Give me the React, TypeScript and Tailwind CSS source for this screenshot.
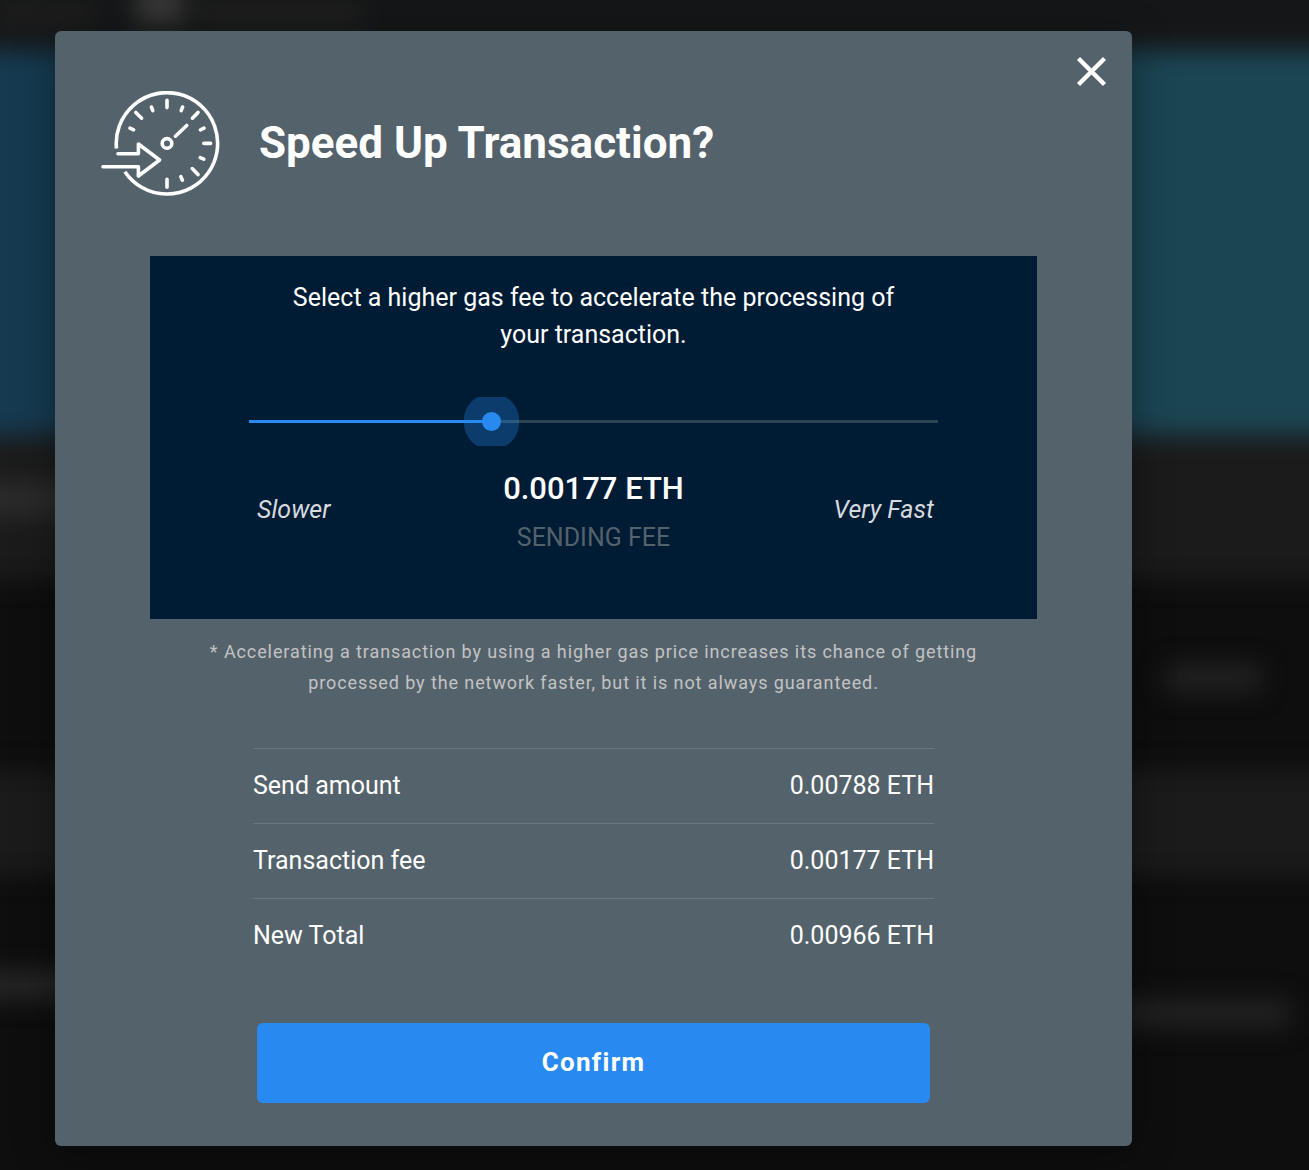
import { useState } from "react";
import type { CSSProperties } from "react";

const amounts = [
  { label: "Send amount", value: "0.00788 ETH" },
  { label: "Transaction fee", value: "0.00177 ETH" },
  { label: "New Total", value: "0.00966 ETH" },
];

function SpeedIcon() {
  return (
    <svg
      viewBox="0 0 120 106"
      className="h-[106px] w-[120px] shrink-0"
      fill="none"
      stroke="white"
      strokeWidth="3.6"
      strokeLinecap="round"
      strokeLinejoin="round"
      aria-hidden="true"
    >
      <path d="M15.5 57.5A50.7 50.7 0 1 1 23.9 80.7" strokeLinecap="butt" />
      <circle cx="66" cy="52.4" r="4.8" />
      <path d="M74.4 45.2 85.7 34.5" />
      <path d="M66 9.2V16.6M66 88.2V96.2M102.8 52.4H109.6M97 21.4 91.4 27.2M34.8 21.4 40.6 27.2M91.2 77.6 97 83.6" />
      <path d="M50.4 16 51.8 19.6M81.6 16 80.2 19.6M29 37.2 32.6 38.8M103 37.2 99.4 38.8M99.2 66.6 102.8 68.2M79.8 85.6 81.4 89.2" />
      <path d="M17 62.7H37.4V53L58.6 69 37.4 85V75.7H2" />
    </svg>
  );
}

/* The wallet page behind the dialog, out of focus. */
function PageBehind() {
  return (
    <div className="absolute inset-0 overflow-hidden bg-[#0e0e0e]" aria-hidden="true">
      <div className="-mx-10 -mt-10 flex h-[1250px] flex-col px-10 blur-[12px]">
        <div className="-mx-10 flex h-[90px] items-end bg-[#151617] px-10 pb-6">
          <div className="h-6 w-24 bg-[#1e1e1e]" />
          <div className="ml-10 h-12 w-12 bg-[#363636]" />
          <div className="ml-4 h-6 w-40 bg-[#202020]" />
        </div>
        <div className="-mx-10 h-[385px] bg-linear-to-r from-[#163a50] from-5% to-[#1b4553] to-90%" />
        <div className="-mx-10 h-[145px] bg-[#1b1b1b] px-10 pt-12">
          <div className="-ml-6 h-8 w-32 bg-[#2c2c2c]" />
        </div>
        <div className="flex h-[190px] justify-end pt-[84px] pr-12">
          <div className="h-7 w-24 bg-[#222222]" />
        </div>
        <div className="-mx-10 h-[105px] bg-[#1b1b1b]" />
        <div className="flex justify-between pt-24">
          <div className="-ml-6 h-7 w-32 bg-[#272727]" />
          <div className="mt-7 mr-5 h-7 w-44 bg-[#222222]" />
        </div>
      </div>
    </div>
  );
}

export default function App() {
  const [speed, setSpeed] = useState(348);
  const fill = { "--fill": `${speed / 10}%` } as CSSProperties;

  return (
    <div className="relative min-h-screen pt-[31px] pr-[177px] pb-6 pl-[55px] font-[Roboto,sans-serif] text-white">
      <PageBehind />
      <div
        role="dialog"
        aria-modal="true"
        aria-labelledby="dialog-title"
        className="relative rounded-md bg-[#54626c] px-[95px] pt-[60px] pb-[43px] shadow-[0_8px_40px_rgba(0,0,0,0.35)]"
      >
        <button type="button" aria-label="Close" className="absolute top-6 right-6 cursor-pointer">
          <svg viewBox="0 0 32 32" className="size-8" fill="none" stroke="white" strokeWidth="4.4" aria-hidden="true">
            <path d="M2.5 3.5 28.5 29.5M28.5 3.5 2.5 29.5" />
          </svg>
        </button>

        <header className="-ml-[49px] flex items-center gap-[38px]">
          <SpeedIcon />
          <h1 id="dialog-title" className="pb-0.5 text-[44px] leading-[52px] font-bold">
            Speed Up Transaction?
          </h1>
        </header>

        <section className="mt-[59px] bg-[#001b34] px-[99px] pt-[23px] pb-[63px]">
          <p className="mx-auto max-w-[640px] text-center text-[25px] leading-[37px]">
            Select a higher gas fee to accelerate the processing of your transaction.
          </p>
          <div className="mt-11 flex h-[49px] items-center overflow-hidden">
            <input
              type="range"
              min={0}
              max={1000}
              value={speed}
              onChange={(e) => setSpeed(Number(e.target.value))}
              aria-label="Gas fee"
              style={fill}
              className="h-[19px] w-full cursor-pointer appearance-none bg-transparent outline-none [&::-webkit-slider-runnable-track]:h-[3px] [&::-webkit-slider-runnable-track]:bg-[linear-gradient(to_right,#288af0_var(--fill),#2c4453_var(--fill))] [&::-webkit-slider-thumb]:-mt-2 [&::-webkit-slider-thumb]:size-[19px] [&::-webkit-slider-thumb]:appearance-none [&::-webkit-slider-thumb]:rounded-full [&::-webkit-slider-thumb]:bg-[#288af0] [&::-webkit-slider-thumb]:shadow-[0_0_0_18px_rgba(40,138,240,0.3)]"
            />
          </div>
          <div className="mt-6 grid grid-cols-3 items-center px-1 text-[25px] leading-[37px]">
            <span className="pb-[7px] pl-1 text-[#d5dade] italic">Slower</span>
            <div className="text-center">
              <p className="text-[31px] leading-[38px] font-medium whitespace-nowrap">0.00177 ETH</p>
              <p className="mt-[11px] text-[#54626c]">SENDING FEE</p>
            </div>
            <span className="pb-[7px] text-right text-[#d5dade] italic">Very Fast</span>
          </div>
        </section>

        <p className="mx-auto mt-[17px] max-w-[790px] text-center text-[18px] leading-[31px] tracking-wider text-[#c3c3c3]">
          * Accelerating a transaction by using a higher gas price increases its chance of getting processed by the
          network faster, but it is not always guaranteed.
        </p>

        <table className="mx-auto mt-[50px] w-full max-w-[681px] text-[25px] leading-[37px]">
          <tbody>
            {amounts.map((row) => (
              <tr key={row.label} className="h-[75px] border-t border-[#6b7780]">
                <th scope="row" className="pb-0.5 text-left font-normal">
                  {row.label}
                </th>
                <td className="pb-0.5 text-right">{row.value}</td>
              </tr>
            ))}
          </tbody>
        </table>

        <button
          type="button"
          className="mx-auto mt-[49px] block h-20 w-full max-w-[673px] cursor-pointer rounded-md bg-[#288af0] text-[26px] font-bold tracking-wider"
        >
          Confirm
        </button>
      </div>
    </div>
  );
}
